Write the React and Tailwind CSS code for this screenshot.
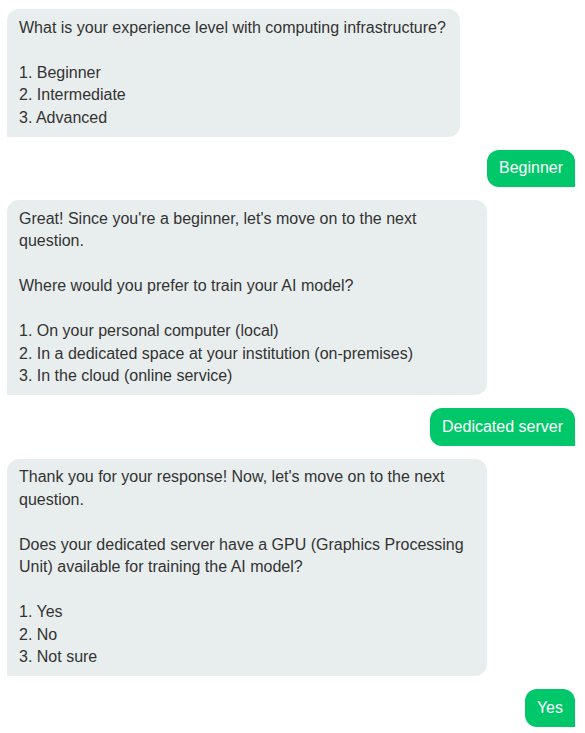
import React from "react";

const messages = [
  {
    from: "bot",
    text: "What is your experience level with computing infrastructure?\n\n1. Beginner\n2. Intermediate\n3. Advanced",
  },
  { from: "user", text: "Beginner" },
  {
    from: "bot",
    text: "Great! Since you're a beginner, let's move on to the next question.\n\nWhere would you prefer to train your AI model?\n\n1. On your personal computer (local)\n2. In a dedicated space at your institution (on-premises)\n3. In the cloud (online service)",
  },
  { from: "user", text: "Dedicated server" },
  {
    from: "bot",
    text: "Thank you for your response! Now, let's move on to the next question.\n\nDoes your dedicated server have a GPU (Graphics Processing Unit) available for training the AI model?\n\n1. Yes\n2. No\n3. Not sure",
  },
  { from: "user", text: "Yes" },
];

export default function App() {
  return (
    <div
      className="min-h-screen bg-white pt-[9px] pl-[7px] pr-[10px] flex flex-col gap-[13px] text-[16px] leading-[22.5px]"
      style={{ fontFamily: '"Liberation Sans", Arial, sans-serif' }}
    >
      {messages.map((m, i) =>
        m.from === "bot" ? (
          <div key={i} className="flex justify-start">
            <div className="max-w-[480px] bg-[#e8eeee] text-[#333333] pl-3 pr-[14px] py-[7.5px] rounded-tl-xl rounded-tr-xl rounded-br-xl whitespace-pre-wrap">
              {m.text}
            </div>
          </div>
        ) : (
          <div key={i} className="flex justify-end">
            <div className="bg-[#00c76a] text-white px-3 py-[7.5px] rounded-tl-xl rounded-tr-xl rounded-bl-xl">
              {m.text}
            </div>
          </div>
        )
      )}
    </div>
  );
}
